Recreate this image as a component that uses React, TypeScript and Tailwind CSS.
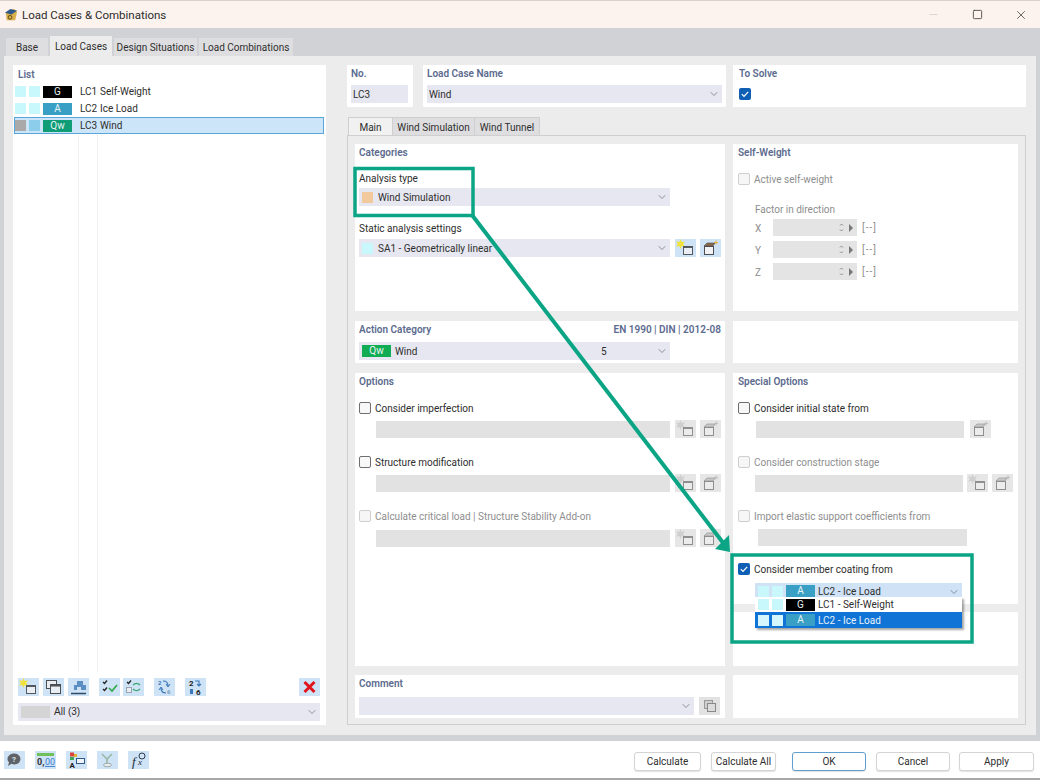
import { ChevronDown, Minus, Square, X } from "lucide-react"
import type { ReactNode } from "react"

const swatch = "w-[11px] h-[11px] shrink-0"

function Chip({ label, color, w = "w-[29px]" }: { label: string; color: string; w?: string }) {
  return (
    <div className={`${w} h-[12px] shrink-0 flex items-center justify-center text-[10px] leading-none text-[#e8f4f4] ${color}`}>
      {label}
    </div>
  )
}

function Heading({ children }: { children: ReactNode }) {
  return <div className="h-[15px] leading-[18px] font-semibold text-[#5c6b8e] text-[10px] whitespace-nowrap">{children}</div>
}

function IconNew({ off = false }: { off?: boolean }) {
  return (
    <div className={`w-[21px] h-[18px] shrink-0 ${off ? "bg-[#e6e6e6]" : "bg-[#cfe3f6]"}`}>
      <svg viewBox="0 0 21 18" className="w-full h-full">
        <path d="M5.500 0l1.200 3 3.200-.7-1.700 2.700 1.700 2.700-3.200-.7-1.200 3-1.200-3-3.200.7 1.700-2.700-1.700-2.700 3.200.7z" fill={off ? "#cfcfcf" : "#f2e23c"} />
        <rect x="8.500" y="7.500" width="9" height="8" fill={off ? "#ececec" : "#e8eef3"} stroke={off ? "#8f8f8f" : "#55585c"} />
        <rect x="8.500" y="7.500" width="9" height="1.500" fill={off ? "#8f8f8f" : "#55585c"} />
      </svg>
    </div>
  )
}

function IconEdit({ off = false }: { off?: boolean }) {
  const c = off ? "#8f8f8f" : "#4c4f52"
  return (
    <div className={`w-[21px] h-[18px] shrink-0 ${off ? "bg-[#e6e6e6]" : "bg-[#cfe3f6]"}`}>
      <svg viewBox="0 0 21 18" className="w-full h-full">
        <rect x="4.500" y="7.500" width="9" height="8" fill={off ? "#ececec" : "#f0f2f4"} stroke={c} />
        <path d="M4 7l3-3h8l-2 3z" fill={off ? "#c8c8c8" : "#8a6a4a"} stroke={c} strokeWidth="0.6" />
        <path d="M16 1.500v4M14 3.500h4" stroke={off ? "#bdbdbd" : "#e0b040"} strokeWidth="1" />
      </svg>
    </div>
  )
}

function IconBox({ children, w = "w-[21px]" }: { children: ReactNode; w?: string }) {
  return (
    <div className={`${w} h-[18px] shrink-0 bg-[#cfe3f6]`}>
      <svg viewBox="0 0 21 18" className="w-full h-full">
        {children}
      </svg>
    </div>
  )
}

function Check({ checked = false, off = false }: { checked?: boolean; off?: boolean }) {
  if (checked) {
    return (
      <div className="w-[12px] h-[12px] rounded-[2px] bg-[#0f5fb4] flex items-center justify-center shrink-0">
        <svg viewBox="0 0 12 12" className="w-full h-full">
          <path d="M2.800 6.200l2.200 2.200 4.200-4.600" fill="none" stroke="#fff" strokeWidth="1.200" />
        </svg>
      </div>
    )
  }
  return <div className={`w-[12px] h-[12px] rounded-[2px] border shrink-0 ${off ? "border-[#cfcfcf] bg-[#f6f6f6]" : "border-[#6f6f6f] bg-[#f8f8f8]"}`} />
}

function CheckRow({ label, checked, off }: { label: string; checked?: boolean; off?: boolean }) {
  return (
    <div className={`flex items-center gap-[4px] h-[14px] ${off ? "text-[#8e8e8e]" : "text-[#2e2e2e]"}`}>
      <Check checked={checked} off={off} />
      <span className="whitespace-nowrap pt-[2px]">{label}</span>
    </div>
  )
}

function Select({ children, className }: { children?: ReactNode; className: string }) {
  return (
    <div className={`bg-[#e6e7f0] flex items-center relative text-[#2e2e2e] ${className}`}>
      {children}
      <ChevronDown size={12} strokeWidth={1.200} className="absolute right-[2px] top-[3px] text-[#4a5568]" />
    </div>
  )
}

function SpinRow({ axis }: { axis: string }) {
  return (
    <div className="flex items-center h-[17px] text-[#8e8e8e]">
      <span className="w-[18px] pt-[2px]">{axis}</span>
      <div className="w-[84px] h-full bg-[#e4e4e4] flex items-center justify-end pr-[3px] gap-[4px] text-[#8c8c8c]">
        <svg viewBox="0 0 5 11" className="w-[5px] h-[11px]">
          <path d="M1 3.500l1.500-1.500 1.500 1.500M1 7.500l1.500 1.500 1.500-1.500" fill="none" stroke="#777" strokeWidth="0.8" />
        </svg>
        <svg viewBox="0 0 6 8" className="w-[6px] h-[8px]">
          <path d="M1 0l4 4-4 4z" fill="#777" />
        </svg>
      </div>
      <span className="ml-[5px] tracking-[1px]">[--]</span>
    </div>
  )
}

function OptionBlock({ label, checked, off, top, gap = "mt-[5px]" }: { label: string; checked?: boolean; off?: boolean; top: string; gap?: string }) {
  return (
    <div className={top}>
      <CheckRow label={label} checked={checked} off={off} />
      <div className={`flex items-center ml-[17px] ${gap}`}>
        <div className="w-[294px] h-[17px] bg-[#e2e2e2]" />
        <div className="flex gap-[4px] ml-[5px]">
          <IconNew off />
          <IconEdit off />
        </div>
      </div>
    </div>
  )
}

function Tab({ label, active, className }: { label: string; active?: boolean; className: string }) {
  return (
    <div className={`h-[18px] pt-[2px] flex items-center justify-center whitespace-nowrap text-[#2e2e2e] ${active ? "bg-[#ececec]" : "bg-[#dedee0]"} ${className}`}>
      {label}
    </div>
  )
}

function ListRow({ chip, color, no, name, s1, s2, selected }: { chip: string; color: string; no: string; name: string; s1: string; s2: string; selected?: boolean }) {
  return (
    <div className={`flex items-center h-[17px] ${selected ? "bg-[#cde5f9] border border-[#5aa5da] ml-[1px] mr-[2px]" : "pl-[2px]"}`}>
      <div className={`${swatch} ${s1}`} />
      <div className={`${swatch} ${s2} ml-[3px]`} />
      <div className="ml-[3px]"><Chip label={chip} color={color} /></div>
      <span className="ml-[8px] w-[20px] text-[#2e2e2e]">{no}</span>
      <span className="text-[#2e2e2e]">{name}</span>
    </div>
  )
}

function Toolbar() {
  return (
    <div className="flex items-center h-[18px] pl-[5px] pr-[6px] mt-auto">
      <IconNew />
      <div className="ml-[4px]">
        <IconBox>
          <rect x="3.500" y="2.500" width="10" height="8" fill="#e8eef3" stroke="#4c4f52" />
          <rect x="7.500" y="6.500" width="10" height="9" fill="#e8eef3" stroke="#4c4f52" />
          <rect x="7.500" y="6.500" width="10" height="2" fill="#4c4f52" />
        </IconBox>
      </div>
      <div className="ml-[4px]">
        <IconBox>
          <path d="M9 3h6v4h3v5h-5V9H9v3H6V7h3z" fill="#5b8fc4" />
          <path d="M3 15.500h15" stroke="#2f4a68" strokeWidth="1.500" />
        </IconBox>
      </div>
      <div className="ml-[10px]">
        <IconBox>
          <path d="M4 4l1.500 1.500L8 2.500M4 11l1.500 1.500L8 9.500" fill="none" stroke="#222" strokeWidth="1.300" />
          <path d="M10 10l3 3 5-6" fill="none" stroke="#2ea84a" strokeWidth="1.600" />
        </IconBox>
      </div>
      <div className="ml-[3px]">
        <IconBox>
          <path d="M4 4l1.500 1.500L8 2.500" fill="none" stroke="#222" strokeWidth="1.300" />
          <rect x="3.500" y="9.500" width="5" height="5" fill="#e8eef3" stroke="#9aa4ae" />
          <path d="M10 7c2-2 5-2 7 0M17 11c-2 2-5 2-7 0" fill="none" stroke="#3fa878" strokeWidth="1.400" />
        </IconBox>
      </div>
      <div className="ml-[10px]">
        <IconBox>
          <text x="4" y="7" fontSize="6" fontWeight="700" fill="#3b78b8">2</text>
          <text x="13" y="16" fontSize="6" fontWeight="700" fill="#7a9cc0">6</text>
          <path d="M9 3c3 0 5 1 5 5M12 15c-3 0-5-1-5-5" fill="none" stroke="#3b78b8" strokeWidth="1.200" />
          <path d="M12 6l2 3 2-3M5 12l2-3 2 3" fill="none" stroke="#3b78b8" strokeWidth="1" />
        </IconBox>
      </div>
      <div className="ml-[10px]">
        <IconBox>
          <text x="4" y="8" fontSize="8" fontWeight="700" fill="#1c1c1c">2</text>
          <rect x="5" y="11" width="3" height="5" fill="#3b78b8" />
          <path d="M10 3h4v5M12 6l2 2 2-2" fill="none" stroke="#3b78b8" strokeWidth="1.100" />
          <text x="11" y="16.500" fontSize="8" fontWeight="700" fill="#1c1c1c">6</text>
        </IconBox>
      </div>
      <div className="ml-auto">
        <IconBox>
          <path d="M5.500 4l10 10M15.500 4l-10 10" stroke="#e0141c" strokeWidth="3" />
        </IconBox>
      </div>
    </div>
  )
}

function FooterButton({ label, className }: { label: string; className: string }) {
  return (
    <div className={`h-[19px] mt-[4px] rounded-[3px] border bg-white flex items-center justify-center text-[#2e2e2e] shadow-[0_1px_1px_rgba(0,0,0,0.12)] ${className}`}>
      {label}
    </div>
  )
}

export default function App() {
  return (
    <div
      className="relative w-[1040px] h-[780px] overflow-hidden flex flex-col bg-[#d1d2d6] text-[10px] leading-[14px]"
      style={{ fontFamily: 'Roboto, "Noto Sans", sans-serif' }}
    >
      {/* Title bar */}
      <div className="h-[28px] shrink-0 bg-[#fdf3ee] border-t border-[#d8d0cc] flex items-center pl-[3px] pr-[12px]">
        <svg viewBox="0 0 16 16" className="w-[15px] h-[15px]">
          <path d="M3 7l2-3 7-2 3 3-2 9H4z" fill="#d8b04c" />
          <path d="M2 6l6-4 7 2-6 4z" fill="#2e5a8c" />
          <circle cx="7.500" cy="11" r="2" fill="none" stroke="#5a4418" strokeWidth="1" />
        </svg>
        <span className="ml-[4px] text-[11.500px] text-[#2b2b2b]">Load Cases &amp; Combinations</span>
        <Minus size={13} strokeWidth={1} className="ml-auto text-[#c4bcb8]" />
        <Square size={11} strokeWidth={1.800} className="ml-[32px] text-[#3c3c3c]" />
        <X size={14} strokeWidth={1.300} className="ml-[31px] text-[#3c3c3c]" />
      </div>

      {/* Top tabs */}
      <div className="h-[28px] shrink-0 flex items-end pl-[6px] gap-[2px]">
        <Tab label="Base" className="w-[42px] bg-[#d9d9dc]" />
        <Tab label="Load Cases" active className="w-[62px] h-[20px]" />
        <Tab label="Design Situations" className="w-[83px]" />
        <Tab label="Load Combinations" className="w-[94px]" />
      </div>

      {/* Body */}
      <div className="mx-[4px] h-[679px] shrink-0 bg-[#ececec] flex pl-[9px] pt-[9px] pb-[10px]">
        {/* List */}
        <div className="w-[313px] h-[660px] shrink-0 bg-white flex flex-col relative pb-[4px]">
          <div className="pl-[5px] h-[16px] flex items-center"><Heading>List</Heading></div>
          <div className="mt-[2px] flex flex-col relative">
            <ListRow chip="G" color="bg-black" no="LC1" name="Self-Weight" s1="bg-[#c8f8fb]" s2="bg-[#c8f8fb]" />
            <ListRow chip="A" color="bg-[#3a9fc4]" no="LC2" name="Ice Load" s1="bg-[#c8f8fb]" s2="bg-[#c8f8fb]" />
            <ListRow chip="Qw" color="bg-[#0f9d78]" no="LC3" name="Wind" s1="bg-[#a9a9a9]" s2="bg-[#8ccdec]" selected />
          </div>
          <div className="absolute left-[65px] top-[70px] w-[20px] h-[537px] border-x border-[#f0f0f0]" />
          <Toolbar />
          <Select className="h-[18px] mt-[7px] mx-[5px] w-[302px] shrink-0">
            <div className="w-[29px] h-[12px] bg-[#d4d4d4] ml-[3px]" />
            <span className="ml-[4px] text-[10px]" style={{ fontFamily: '"Liberation Sans", sans-serif' }}>All (3)</span>
          </Select>
        </div>

        {/* Right side */}
        <div className="ml-[21px] w-[679px] shrink-0 flex flex-col">
          <div className="h-[42px] flex shrink-0">
            <div className="w-[66px] bg-white pl-[4px]">
              <Heading>No.</Heading>
              <div className="w-[57px] h-[18px] mt-[5px] pt-[2px] bg-[#e6e7f0] flex items-center pl-[2px] text-[#2e2e2e]">LC3</div>
            </div>
            <div className="w-[303px] ml-[10px] bg-white pl-[4px]">
              <Heading>Load Case Name</Heading>
              <Select className="h-[18px] w-[295px] mt-[5px] pl-[2px]"><span className="pt-[2px]">Wind</span></Select>
            </div>
            <div className="w-[293px] ml-[7px] bg-white pl-[6px]">
              <Heading>To Solve</Heading>
              <div className="mt-[8px]"><Check checked /></div>
            </div>
          </div>

          <div className="mt-[10px] flex h-[18px] shrink-0 pl-[1px]">
            <Tab label="Main" active className="w-[45px] bg-[#f1f1f1] border-t border-x border-[#cfcfcf]" />
            <Tab label="Wind Simulation" className="w-[82px] border-t border-r border-[#cfcfcf]" />
            <Tab label="Wind Tunnel" className="w-[65px] border-t border-r border-[#cfcfcf]" />
          </div>

          {/* Tab panel */}
          <div className="h-[590px] border border-[#cfcfcf] bg-[#ececec] pl-[7px] pt-[8px] grid grid-cols-[370px_285px] grid-rows-[167px_52px_303px_52px] gap-x-[8px] shrink-0 content-start">
            {/* Categories */}
            <div className="bg-white pl-[4px]">
              <Heading>Categories</Heading>
              <div className="mt-[13px] text-[#2e2e2e]">Analysis type</div>
              <Select className="h-[18px] w-[311px] mt-[2px]">
                <div className="w-[11px] h-[11px] bg-[#f2c99c] ml-[3px]" />
                <span className="ml-[5px] pt-[2px]">Wind Simulation</span>
              </Select>
              <div className="mt-[16px] text-[#2e2e2e]">Static analysis settings</div>
              <div className="flex mt-[3px]">
                <Select className="h-[18px] w-[311px]">
                  <div className="w-[11px] h-[11px] bg-[#c8f8fb] ml-[3px]" />
                  <span className="ml-[5px] pt-[2px]">SA1 - Geometrically linear</span>
                </Select>
                <div className="flex gap-[4px] ml-[5px]">
                  <IconNew />
                  <IconEdit />
                </div>
              </div>
            </div>

            {/* Self-Weight */}
            <div className="bg-white pl-[5px]">
              <Heading>Self-Weight</Heading>
              <div className="mt-[13px]"><CheckRow label="Active self-weight" off /></div>
              <div className="pl-[17px]">
                <div className="mt-[17px] text-[#8e8e8e]">Factor in direction</div>
                <div className="mt-[2px] flex flex-col gap-[5px]">
                  <SpinRow axis="X" />
                  <SpinRow axis="Y" />
                  <SpinRow axis="Z" />
                </div>
              </div>
            </div>

            {/* Action Category */}
            <div className="bg-white px-[4px] mt-[10px] h-[42px]">
              <div className="flex justify-between">
                <Heading>Action Category</Heading>
                <Heading>EN 1990 | DIN | 2012-08</Heading>
              </div>
              <Select className="h-[18px] w-[311px] mt-[6px]">
                <div className="ml-[3px]"><Chip label="Qw" color="bg-[#12ac54]" /></div>
                <span className="ml-[4px] pt-[2px]">Wind</span>
                <span className="absolute left-[242px] top-[3px]">5</span>
              </Select>
            </div>
            <div className="bg-white mt-[10px] h-[42px]" />

            {/* Options */}
            <div className="bg-white pl-[4px] mt-[10px] h-[293px]">
              <Heading>Options</Heading>
              <OptionBlock top="mt-[13px]" label="Consider imperfection" />
              <OptionBlock top="mt-[17px]" label="Structure modification" />
              <OptionBlock top="mt-[17px]" gap="mt-[6px]" label="Calculate critical load | Structure Stability Add-on" off />
            </div>

            {/* Special Options */}
            <div className="mt-[10px] h-[293px] flex flex-col">
              <div className="bg-white pl-[5px] h-[231px] relative">
                <Heading>Special Options</Heading>
                <div className="mt-[13px]"><CheckRow label="Consider initial state from" /></div>
                <div className="flex items-center mt-[5px] ml-[18px]">
                  <div className="w-[208px] h-[17px] bg-[#e2e2e2]" />
                  <div className="ml-[6px]"><IconEdit off /></div>
                </div>
                <div className="mt-[17px]"><CheckRow label="Consider construction stage" off /></div>
                <div className="flex items-center mt-[5px] ml-[17px]">
                  <div className="w-[208px] h-[17px] bg-[#e2e2e2]" />
                  <div className="ml-[4px] flex gap-[4px]"><IconNew off /><IconEdit off /></div>
                </div>
                <div className="mt-[17px]"><CheckRow label="Import elastic support coefficients from" off /></div>
                <div className="w-[209px] h-[17px] mt-[6px] ml-[20px] bg-[#e2e2e2]" />
                <div className="mt-[16px]"><CheckRow label="Consider member coating from" checked /></div>
                <Select className="h-[16px] w-[207px] mt-[7px] ml-[17px] !bg-[#cfe2f6]">
                  <div className="flex items-center ml-[3px] gap-[3px]">
                    <div className={`${swatch} bg-[#c8f8fb]`} />
                    <div className={`${swatch} bg-[#c8f8fb]`} />
                    <Chip label="A" color="bg-[#3a9fc4]" />
                  </div>
                  <span className="ml-[3px] pt-[1px]">LC2 - Ice Load</span>
                </Select>

                {/* Open dropdown */}
                <div className="absolute left-[22px] top-[224px] w-[207px] z-10 bg-white shadow-[2px_2px_2px_rgba(0,0,0,0.35)]">
                  <div className="h-[15px] flex items-center pl-[3px] gap-[3px] text-[#2e2e2e]">
                    <div className={`${swatch} bg-[#c8f8fb]`} />
                    <div className={`${swatch} bg-[#c8f8fb]`} />
                    <Chip label="G" color="bg-black" />
                    <span className="pt-[1px]">LC1 - Self-Weight</span>
                  </div>
                  <div className="h-[16px] flex items-center pl-[3px] gap-[3px] bg-[#0f74d6] text-[#e8f2fc]">
                    <div className={`${swatch} bg-[#d4f6fc]`} />
                    <div className={`${swatch} bg-[#d4f6fc]`} />
                    <Chip label="A" color="bg-[#3a9fc4]" />
                    <span className="pt-[1px]">LC2 - Ice Load</span>
                  </div>
                </div>
              </div>
              <div className="bg-white h-[54px] mt-[8px]" />
            </div>

            {/* Comment */}
            <div className="bg-white pl-[4px] mt-[9px] h-[43px]">
              <Heading>Comment</Heading>
              <div className="flex mt-[7px]">
                <Select className="h-[18px] w-[335px]" />
                <div className="ml-[5px] w-[21px] h-[18px] bg-[#e2e2e2] flex items-center justify-center">
                  <svg viewBox="0 0 14 14" className="w-[14px] h-[14px]">
                    <rect x="1.500" y="1.500" width="8" height="8" fill="#cfcfcf" stroke="#999" />
                    <rect x="4.500" y="4.500" width="8" height="8" fill="#dcdcdc" stroke="#888" />
                  </svg>
                </div>
              </div>
            </div>
            <div className="bg-white mt-[9px] h-[43px]" />
          </div>
        </div>
      </div>

      <div className="h-[6px] shrink-0" />

      {/* Footer */}
      <div className="h-[37px] shrink-0 bg-white flex items-center pl-[4px] pr-[6px]">
        <IconBox>
          <path d="M10.500 2.500a6 5.500 0 1 1-3 10.300L4 15l1-3.500a6 5.500 0 0 1 5.500-9z" fill="#5f6266" />
          <text x="8" y="11" fontSize="8" fontWeight="700" fill="#d8e4ee">?</text>
        </IconBox>
        <div className="ml-[10px]">
          <IconBox>
            <rect x="2" y="2" width="17" height="3" fill="#6fbf5a" />
            <text x="2" y="14" fontSize="9" fontWeight="700" fill="#333">0,</text>
            <text x="10" y="14" fontSize="9" fill="#3c7fd0" textDecoration="underline">00</text>
          </IconBox>
        </div>
        <div className="ml-[10px]">
          <IconBox>
            <rect x="4" y="1.500" width="4" height="4" fill="#d8443c" />
            <rect x="8" y="3" width="3" height="3" fill="#e0b030" />
            <rect x="4" y="6" width="4" height="3" fill="#3fa858" />
            <text x="3.500" y="16.500" fontSize="8" fontWeight="700" fill="#222">A</text>
            <rect x="10.500" y="7.500" width="8" height="5" fill="#f0f4f8" stroke="#2f5a8c" />
          </IconBox>
        </div>
        <div className="ml-[10px]">
          <IconBox>
            <path d="M5 3l5 5 5-5M10 8v5" fill="none" stroke="#9ab8a8" strokeWidth="1.600" />
            <ellipse cx="10.500" cy="14" rx="4" ry="1.800" fill="#e8eef0" stroke="#9aa8a8" />
          </IconBox>
        </div>
        <div className="ml-[10px]">
          <IconBox>
            <text x="4" y="15" fontSize="13" fontStyle="italic" fontFamily="Liberation Serif" fill="#1f2a3a">f</text>
            <text x="10" y="14" fontSize="9" fontStyle="italic" fontFamily="Liberation Serif" fill="#1f2a3a">x</text>
            <circle cx="14" cy="5" r="3" fill="#cfe3f6" stroke="#2f3a4a" />
          </IconBox>
        </div>
        <FooterButton label="Calculate" className="ml-auto w-[67px] border-[#d4d4d4]" />
        <FooterButton label="Calculate All" className="ml-[10px] w-[65px] border-[#d4d4d4]" />
        <FooterButton label="OK" className="ml-[16px] w-[74px] border-[#5f9fd0]" />
        <FooterButton label="Cancel" className="ml-[10px] w-[74px] border-[#d4d4d4]" />
        <FooterButton label="Apply" className="ml-[9px] w-[75px] border-[#d4d4d4]" />
      </div>
      <div className="h-[2px] shrink-0 bg-[#a8a8a8]" />

      {/* Callout annotations */}
      <svg viewBox="0 0 1040 780" className="absolute inset-0 w-[1040px] h-[780px] pointer-events-none z-20">
        <rect x="355" y="168.500" width="118" height="47" fill="none" stroke="#0ba585" strokeWidth="3.500" />
        <rect x="732" y="555" width="240" height="87" fill="none" stroke="#0ba585" strokeWidth="3.500" />
        <line x1="472" y1="215" x2="724" y2="544" stroke="#0ba585" strokeWidth="4" />
        <polygon points="730,552 729,535 715,549" fill="#0ba585" />
      </svg>
    </div>
  )
}
